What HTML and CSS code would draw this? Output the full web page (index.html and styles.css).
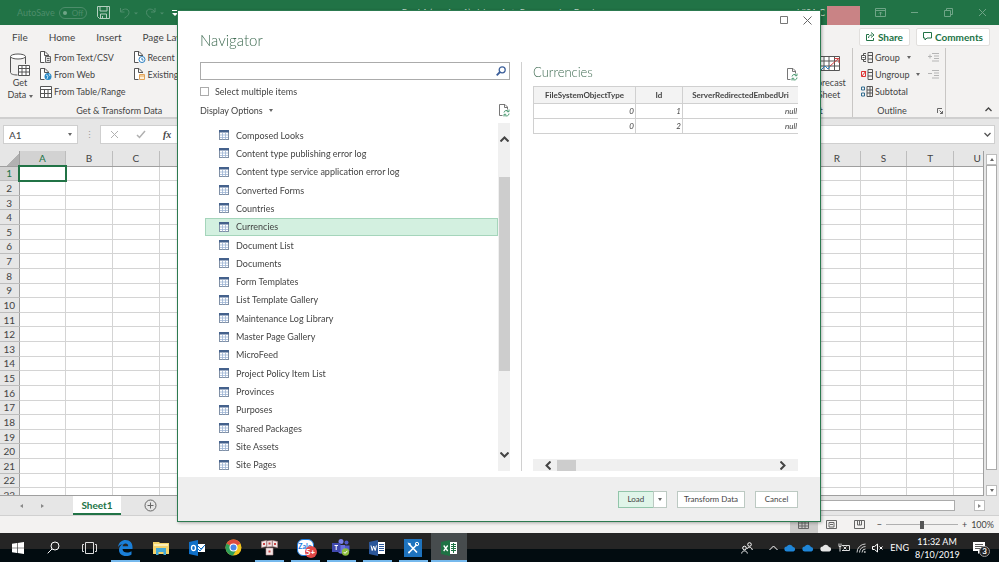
FILE: index.html
```html
<!DOCTYPE html>
<html lang="en">
<head>
    <meta charset="utf-8">
    <title>Excel - Navigator</title>
    <link rel="stylesheet" href="styles.css">
</head>
<body>
    <svg class="sprite" aria-hidden="true">
        <symbol id="i-table" viewBox="0 0 10 10">
            <rect x=".5" y=".5" width="9" height="9" fill="#fff" stroke="#8090a6"/>
            <path d="M0 0h10v2.500H0z" fill="#44618c"/>
            <path d="M3.500 2.500v7M6.500 2.500v7M1 5h8M1 7.500h8" stroke="#9db4d4" stroke-width=".8"/>
        </symbol>
        <symbol id="i-refresh" viewBox="0 0 12 13">
            <path d="M4.500 11.500h-3V.5H7l2.500 2.500v2.500M6.500.5v3h3" fill="none" stroke="#777"/>
            <path d="M6 8.500a2.500 2.500 0 0 1 4.500-1M11 9.500a2.500 2.500 0 0 1-4.500 1.500M11 5.500v2.200H8.800M6 12.500v-2.200h2.200" fill="none" stroke="#4c9a72"/>
        </symbol>
        <symbol id="i-page" viewBox="0 0 12 13">
            <path d="M4.500 11.500h-4V.5H5L8.500 4v1M4.500.5v4h4" fill="#fff" stroke="#555"/>
        </symbol>
        <symbol id="i-cloud" viewBox="0 0 12 8">
            <path d="M3 7.500a2.500 2.500 0 0 1-.3-5A3.500 3.500 0 0 1 9 3a2.300 2.300 0 0 1 .5 4.500z"/>
        </symbol>
    </svg>

    <div class="app">
        <header class="titlebar">
            <span class="autosave">AutoSave</span>
            <label class="toggle"><input type="checkbox" aria-label="AutoSave"><span>Off</span></label>
            <button class="save" aria-label="Save">
                <svg width="13" height="13" viewBox="0 0 13 13" fill="none" stroke="#b5d0c0"><path d="M.5.5h12v12h-10l-2-2zM3 .5v4.500h7V.5M3.500 12.500V8h6v4.500M5.500 12V10"/></svg>
            </button>
            <button class="dim" aria-label="Undo">
                <svg width="20" height="12" viewBox="0 0 20 12" fill="none" stroke="#4d8d6b"><path d="M1.500 1v4h4M1.500 5C4 1 10 1 10 5.500c0 2.500-2 4-4.500 5.500"/><path d="M15 5.500h4l-2 2z" fill="#4d8d6b" stroke="none"/></svg>
            </button>
            <button class="dim" aria-label="Redo">
                <svg width="20" height="12" viewBox="0 0 20 12" fill="none" stroke="#4d8d6b"><path d="M10 1v4H6M10 5C7.500 1 1.500 1 1.500 5.500c0 2.500 2 4 4.500 5.500"/><path d="M15 5.500h4l-2 2z" fill="#4d8d6b" stroke="none"/></svg>
            </button>
            <button aria-label="Customize toolbar">
                <svg width="8" height="8" viewBox="0 0 8 8" fill="#fff"><path d="M1 1h6v1H1zM1 4h6L4 7z"/></svg>
            </button>
            <span class="doc-title">Book1 (version 1).xlsb &nbsp;-&nbsp; AutoRecovered &nbsp;-&nbsp; Excel</span>
            <span class="user">VISA C</span>
            <span class="avatar"></span>
            <div class="window-buttons">
                <button aria-label="Ribbon display options"><svg width="11" height="9" viewBox="0 0 11 9" fill="none" stroke="#6fa587"><path d="M.5.5h10v8H.5zM.5 2.500h10M5.500 7.500V4M4 5.500L5.500 4 7 5.500"/></svg></button>
                <button aria-label="Minimize"><svg width="9" height="9" viewBox="0 0 9 9" stroke="#6fa587"><path d="M1 4.500h7"/></svg></button>
                <button aria-label="Restore"><svg width="9" height="9" viewBox="0 0 9 9" fill="none" stroke="#6fa587"><path d="M.5 2.500h6v6h-6zM2.500 2.500v-2h6v6h-2"/></svg></button>
                <button aria-label="Close"><svg width="9" height="9" viewBox="0 0 9 9" stroke="#6fa587"><path d="M1 1l7 7M8 1L1 8"/></svg></button>
            </div>
        </header>

        <nav class="tabs">
            <a href="#">File</a>
            <a href="#">Home</a>
            <a href="#">Insert</a>
            <a href="#">Page Layout</a>
            <button class="pill share"><svg width="9" height="9" viewBox="0 0 9 9" fill="none" stroke="#217346"><path d="M3 2.500H.5v6h7V6M2.500 6C2.500 4 4 3 6 3M5 .5L8 3 5 5.500"/></svg>Share</button>
            <button class="pill"><svg width="9" height="9" viewBox="0 0 9 9" fill="none" stroke="#217346"><path d="M.5.5h8v5.500H4L2 8V6H.5z"/></svg>Comments</button>
        </nav>

        <div class="ribbon">
            <section class="group">
                <div class="group-body">
                    <button class="big">
                        <svg width="22" height="24" viewBox="0 0 22 24" fill="none" stroke="#555"><path d="M1.500 3.500v16c0 1.500 3 2.500 7 2.500M16.500 3.500V11"/><ellipse cx="9" cy="3.500" rx="7.500" ry="2.500" fill="#fff"/><path d="M9.500 12.500h11v10h-11zM9.500 15.500h11M9.500 19h11M13 12.500v10M17 12.500v10" fill="#fff"/></svg>
                        <span>Get<br>Data <i class="caret"></i></span>
                    </button>
                    <div class="stack">
                        <button><svg width="12" height="13"><use href="#i-page"/><path d="M5.500 5.500h5v6h-5zM7 7.500h2.500M7 9.500h2.500" fill="#ddd" stroke="#666"/></svg>From Text/CSV</button>
                        <button><svg width="12" height="13"><use href="#i-page"/><circle cx="8" cy="8.500" r="3.500" fill="#2b8ac6"/><path d="M6 7l2 1-1 3M9 6l1 2" stroke="#bfe0f3" fill="none"/></svg>From Web</button>
                        <button><svg width="12" height="12" viewBox="0 0 12 12" fill="#fff" stroke="#555"><path d="M.5.5h11v11H.5zM.5 3.500h11M4.500 3.500v8M.5 7.500h11M8 3.500v8"/></svg>From Table/Range</button>
                    </div>
                    <div class="stack">
                        <button><svg width="12" height="13"><use href="#i-page"/><circle cx="8" cy="8.500" r="3" fill="#fff" stroke="#2b7fc0"/><path d="M8 7v2h1.500" stroke="#2b7fc0" fill="none"/></svg>Recent Sources</button>
                        <button><svg width="12" height="13"><use href="#i-page"/><path d="M5.500 6.500h5v5h-5zM5.500 8h5" fill="#fff0d8" stroke="#e2a55a"/></svg>Existing Connections</button>
                    </div>
                </div>
                <h2>Get &amp; Transform Data</h2>
            </section>
            <section class="group forecast">
                <div class="group-body">
                    <button class="big">
                        <svg width="26" height="24" viewBox="0 0 26 24" fill="none" stroke="#555"><path d="M1.500 3.500h22v14h-22zM1.500 8h22M1.500 13h22M8 3.500v14M13 3.500v14M18.500 3.500v14" fill="#fff"/><path d="M3 19l6-6 3 3 3-4" stroke="#2b7fc0"/><path d="M14 13l8-7M18.500 5.500H23V10" stroke="#d64545"/></svg>
                        <span>Forecast<br>Sheet</span>
                    </button>
                </div>
                <h2>Forecast</h2>
            </section>
            <section class="group outline">
                <div class="group-body">
                    <div class="stack">
                        <button><svg width="12" height="11" viewBox="0 0 12 11" fill="none" stroke="#555"><path d="M7 .5h4.500v10H7zM7 3.500h4.500M7 7h4.500M5 1.500H2.500v8H5"/><path d="M.5 3.500h4v4h-4z" fill="#fff"/><path d="M1.500 5.500h2"/></svg>Group <i class="caret"></i></button>
                        <button><svg width="12" height="11" viewBox="0 0 12 11" fill="none" stroke="#555"><path d="M7 .5h4.500v10H7zM7 3.500h4.500M7 7h4.500"/><path d="M.5 2.500h4v5h-4zM1 7l4-5" stroke="#d33"/></svg>Ungroup <i class="caret"></i></button>
                        <button><svg width="12" height="11" viewBox="0 0 12 11" fill="none" stroke="#555"><path d="M6 .5h5.500v10H6zM6 4h5.500M6 7h5.500M9 .5v10"/><path d="M.5 1h3v3h-3zM.5 7h3v3h-3z" stroke="#2f6b8f"/></svg>Subtotal</button>
                    </div>
                    <div class="stack">
                        <button aria-label="Show detail"><svg width="12" height="9" viewBox="0 0 12 9" stroke="#b5b5b5"><path d="M0 3.500h4M2 1.500v4M4 .5h7M6 3h5M6 5.500h5M4 8h7"/></svg></button>
                        <button aria-label="Hide detail"><svg width="12" height="9" viewBox="0 0 12 9" stroke="#b5b5b5"><path d="M0 3.500h4M4 .5h7M6 3h5M6 5.500h5M4 8h7"/></svg></button>
                    </div>
                </div>
                <h2>Outline <svg width="6" height="6" viewBox="0 0 6 6" fill="none" stroke="#666"><path d="M.5 5V.5H5M2.500 2.500l3 3M5.500 3v2.500H3"/></svg></h2>
            </section>
            <button class="collapse" aria-label="Collapse ribbon"><svg width="7" height="5" viewBox="0 0 7 5" fill="none" stroke="#444" stroke-width="1.300"><path d="M.5 4l3-3 3 3"/></svg></button>
        </div>

        <div class="formula-bar">
            <div class="name-box">
                <input type="text" value="A1" aria-label="Name box">
                <i class="caret"></i>
            </div>
            <span class="dots">⋮</span>
            <div class="formula">
                <svg width="9" height="9" viewBox="0 0 9 9" stroke="#b0b0b0"><path d="M1 1l7 7M8 1L1 8"/></svg>
                <svg width="10" height="9" viewBox="0 0 10 9" fill="none" stroke="#b0b0b0" stroke-width="1.500"><path d="M1 5l2.500 2.500L9 1"/></svg>
                <em>fx</em>
                <input type="text" aria-label="Formula">
                <svg width="7" height="5" viewBox="0 0 7 5" fill="none" stroke="#555" stroke-width="1.300"><path d="M.5 1l3 3 3-3"/></svg>
            </div>
        </div>

        <main class="workspace">
            <div class="sheet">
                <table class="grid" id="grid"></table>
            </div>
            <div class="vscroll">
                <button aria-label="Scroll up"><i class="caret up"></i></button>
                <div class="thumb"></div>
                <button aria-label="Scroll down"><i class="caret"></i></button>
            </div>
        </main>

        <div class="sheet-tabs">
            <i class="caret left"></i>
            <i class="caret right"></i>
            <a href="#" class="sheet-tab">Sheet1</a>
            <button aria-label="New sheet"><svg width="13" height="13" viewBox="0 0 13 13" fill="none" stroke="#666"><circle cx="6.500" cy="6.500" r="5.500"/><path d="M3.500 6.500h6M6.500 3.500v6"/></svg></button>
            <div class="hscroll">
                <div class="thumb"></div>
                <button aria-label="Scroll right"><i class="caret right"></i></button>
            </div>
        </div>

        <div class="statusbar">
            <button class="view active" aria-label="Normal"><svg width="11" height="9" viewBox="0 0 11 9" fill="none" stroke="#666"><path d="M.5.5h10v8H.5zM.5 3h10M.5 6h10M4 .5v8M7 .5v8"/></svg></button>
            <button class="view" aria-label="Page layout"><svg width="11" height="9" viewBox="0 0 11 9" fill="none" stroke="#666"><path d="M.5.5h10v8H.5zM3 2.500h5v4.500H3zM4 4.500h3"/></svg></button>
            <button class="view" aria-label="Page break"><svg width="11" height="9" viewBox="0 0 11 9" fill="none" stroke="#666"><path d="M.5.5h10v8H.5zM3.500.5V5h4V.5M5.500.5V5"/></svg></button>
            <div class="zoom">
                <span>−</span>
                <input type="range" min="0" max="100" value="50" aria-label="Zoom">
                <span>+</span>
                <span class="percent">100%</span>
            </div>
        </div>

        <footer class="taskbar">
            <button class="start" aria-label="Start"><svg width="12" height="12" viewBox="0 0 12 12" fill="#fff"><path d="M0 1.700l5-.7v4.700H0zM5.600.9L12 0v5.700H5.600zM0 6.300h5V11l-5-.7zM5.600 6.300H12V12l-6.400-.9z"/></svg></button>
            <button aria-label="Search"><svg width="13" height="13" viewBox="0 0 13 13" fill="none" stroke="#fff"><circle cx="8" cy="5" r="4"/><path d="M5 8L.7 12.300"/></svg></button>
            <button aria-label="Task view"><svg width="15" height="12" viewBox="0 0 15 12" fill="none" stroke="#ddd"><path d="M3.500.5h8v11h-8zM2 2.500H.5v7H2M13 2.500h1.500v7H13"/></svg></button>
            <button class="open" aria-label="Edge"><svg width="16" height="16" viewBox="0 0 16 16"><path d="M1 7C2 2 5 0 8.500 0 13 0 15.500 3 15.500 7v2H5.500c.2 2.500 2 3.500 4.500 3.500 1.800 0 3.200-.4 4.500-1.200v3.200C13 15.500 11.200 16 9 16c-4.500 0-7-2.600-7-6 0-2.700 1.500-4.700 4-6C3.600 4.300 2 5.500 1 7zm4.600-.8h5.600c0-1.700-1-2.700-2.600-2.700S5.900 4.500 5.600 6.200z" fill="#1a7fd8"/></svg></button>
            <button aria-label="File Explorer"><svg width="16" height="14" viewBox="0 0 16 14"><path d="M0 1h6l1 1h9v11H0z" fill="#f3d36b"/><path d="M1 3h14v2H1z" fill="#fbeeb4"/><path d="M3 7h10v7h-2.500v-3h-5v3H3z" fill="#45a9d6"/></svg></button>
            <button aria-label="Outlook"><svg width="16" height="16" viewBox="0 0 16 16"><path d="M7 4h9v8H7z" fill="#fff"/><path d="M8 5l4 4 4-4M9 9l2 2 4-5" stroke="#0f70c8" fill="none"/><path d="M0 2l9-2v16l-9-2z" fill="#0f70c8"/><ellipse cx="4.500" cy="8" rx="2" ry="2.600" fill="none" stroke="#fff" stroke-width="1.300"/></svg></button>
            <button aria-label="Chrome"><svg width="17" height="17" viewBox="0 0 17 17"><circle cx="8.500" cy="8.500" r="8" fill="#f3c51d"/><path d="M8.500 8.500L1.600 4.500A8 8 0 0 1 15.400 4.500z" fill="#dd4b3e"/><path d="M8.500 8.500L1.600 4.500A8 8 0 0 0 8 16.500l3-5z" fill="#2f9f5a"/><circle cx="8.500" cy="8.500" r="4" fill="#fff"/><circle cx="8.500" cy="8.500" r="3" fill="#4a86e8"/></svg></button>
            <button class="open" aria-label="Boxes"><svg width="17" height="16" viewBox="0 0 17 16" fill="#f1e6e6" stroke="#b98f92" stroke-width=".6"><path d="M.5 1.500l5-1v6l-5 1zM6 1l5-.5v6L6 7zM11.500.5l5 1v6l-5-1zM5 8h7v7H5z"/><path d="M2 3h2v2H2zM7.500 2.500h2v2h-2zM13 3h2v2h-2zM7.500 10.500h2v2h-2z" fill="#c44" stroke="none"/></svg></button>
            <button class="open" aria-label="Zalo"><span class="zalo">Zalo<b>5+</b></span></button>
            <button class="open" aria-label="Teams"><svg width="18" height="17" viewBox="0 0 18 17"><circle cx="9" cy="2.500" r="2.500" fill="#7b83eb"/><circle cx="14.500" cy="3.500" r="2" fill="#5059c9"/><path d="M6 6h7v6a4 4 0 0 1-7 1z" fill="#6a72dd"/><path d="M13 6.500h4.500V12L13 14z" fill="#5059c9"/><path d="M0 4h8.500v9H0z" fill="#4048ae"/><path d="M2.500 6.500H6M4.200 6.500v4.500" stroke="#fff"/><circle cx="13.500" cy="13" r="3.700" fill="#8cbd3f"/><path d="M11.700 13l1.300 1.400 2.400-2.600" stroke="#fff" fill="none"/></svg></button>
            <button class="open" aria-label="Word"><svg width="16" height="16" viewBox="0 0 16 16"><path d="M8 2h8v12H8z" fill="#fff"/><path d="M10 4.500h5M10 6.500h5M10 8.500h5M10 10.500h5" stroke="#2b579a"/><path d="M0 2l9-2v16l-9-2z" fill="#2b579a"/><path d="M2 5.500l1.200 5L4.700 6l1.500 4.500 1.200-5" fill="none" stroke="#fff"/></svg></button>
            <button class="open" aria-label="Tools"><svg width="18" height="18" viewBox="0 0 18 18"><path d="M0 0h18v18H0z" fill="#1e73be"/><path d="M5 13.500l8-8M5 5l8 8.500" stroke="#fff" stroke-width="1.600"/><path d="M3.500 3.500l1.500 3 1.500-.5.500-1.500z" fill="#fff"/><circle cx="13" cy="5" r="1.700" fill="none" stroke="#fff"/><circle cx="5" cy="13.500" r="1" fill="#fff"/></svg></button>
            <button class="open current" aria-label="Excel"><svg width="16" height="16" viewBox="0 0 16 16"><path d="M8 2h8v12H8z" fill="#fff"/><path d="M10 4.500h5M10 6.500h5M10 8.500h5M10 10.500h5M12.500 3v10" stroke="#1f7244"/><path d="M0 2l9-2v16l-9-2z" fill="#1f7244"/><path d="M2.700 5.500l4 5.500M6.700 5.500l-4 5.500" stroke="#fff" stroke-width="1.300"/></svg></button>
            <div class="tray">
                <svg class="people" width="12" height="12" viewBox="0 0 12 12" fill="none" stroke="#fff"><circle cx="8.500" cy="2.500" r="1.800"/><path d="M6 7c.5-2.500 4.800-2.500 5.300 1"/><circle cx="3.500" cy="6" r="1.800"/><path d="M.7 11.500c.3-3.500 5.300-3.500 5.600 0"/></svg>
                <svg width="9" height="6" viewBox="0 0 9 6" fill="none" stroke="#fff"><path d="M.5 5l4-4 4 4"/></svg>
                <svg width="12" height="8" fill="#1f86d8"><use href="#i-cloud"/></svg>
                <svg width="12" height="8" fill="#1f86d8"><use href="#i-cloud"/></svg>
                <svg width="12" height="8" fill="#e6e6e6"><use href="#i-cloud"/></svg>
                <svg width="12" height="9" viewBox="0 0 12 9" fill="none" stroke="#ddd"><path d="M4 2.500h7.500v5H4M5.500 3.500l3 3M8.500 3.500l-3 3M1 .5v3h2v-3M2 3.500v5"/></svg>
                <svg width="10" height="10" viewBox="0 0 10 10" fill="none" stroke="#ccc"><path d="M1 9.500A8.500 8.500 0 0 1 9.500 1M3.500 9.500a6 6 0 0 1 6-6M6 9.500A3.500 3.500 0 0 1 9.500 6"/><circle cx="8.800" cy="9" r=".6"/></svg>
                <svg width="12" height="10" viewBox="0 0 12 10" fill="none" stroke="#fff"><path d="M.5 3.500h2L5.500 1v8l-3-2.500h-2zM7.500 3.500l3 3M10.500 3.500l-3 3"/></svg>
                <span>ENG</span>
                <span class="clock">11:32 AM<br>8/10/2019</span>
                <span class="notify"><svg width="12" height="12" viewBox="0 0 12 12"><path d="M0 0h12v9H8l-3 3V9H0z" fill="#fff"/><path d="M2 2.500h8M2 4.500h8M2 6.500h8" stroke="#333" stroke-width=".8"/></svg><b>3</b></span>
            </div>
        </footer>
    </div>

    <div class="dialog" role="dialog" aria-labelledby="dialog-title">
        <div class="dialog-controls">
            <button aria-label="Maximize"><svg width="8" height="8" viewBox="0 0 8 8" fill="none" stroke="#777"><path d="M.5.5h7v7h-7z"/></svg></button>
            <button aria-label="Close"><svg width="9" height="9" viewBox="0 0 9 9" stroke="#666"><path d="M.5.5l8 8M8.500.5l-8 8"/></svg></button>
        </div>
        <h1 id="dialog-title">Navigator</h1>
        <div class="panes">
            <div class="left-pane">
                <div class="search">
                    <input type="text" aria-label="Search">
                    <svg width="10" height="10" viewBox="0 0 10 10" fill="none" stroke="#3c5f9a" stroke-width="1.300"><circle cx="6.200" cy="3.800" r="3"/><path d="M4 6L.7 9.300" stroke-width="1.800"/></svg>
                </div>
                <div class="multi">
                    <input type="checkbox" id="multi">
                    <label for="multi">Select multiple items</label>
                </div>
                <div class="options">
                    <button>Display Options <i class="caret"></i></button>
                    <button aria-label="Refresh"><svg width="12" height="13"><use href="#i-refresh"/></svg></button>
                </div>
                <div class="tree">
                    <ul>
                        <li><svg><use href="#i-table"/></svg>Composed Looks</li>
                        <li><svg><use href="#i-table"/></svg>Content type publishing error log</li>
                        <li><svg><use href="#i-table"/></svg>Content type service application error log</li>
                        <li><svg><use href="#i-table"/></svg>Converted Forms</li>
                        <li><svg><use href="#i-table"/></svg>Countries</li>
                        <li class="selected"><svg><use href="#i-table"/></svg>Currencies</li>
                        <li><svg><use href="#i-table"/></svg>Document List</li>
                        <li><svg><use href="#i-table"/></svg>Documents</li>
                        <li><svg><use href="#i-table"/></svg>Form Templates</li>
                        <li><svg><use href="#i-table"/></svg>List Template Gallery</li>
                        <li><svg><use href="#i-table"/></svg>Maintenance Log Library</li>
                        <li><svg><use href="#i-table"/></svg>Master Page Gallery</li>
                        <li><svg><use href="#i-table"/></svg>MicroFeed</li>
                        <li><svg><use href="#i-table"/></svg>Project Policy Item List</li>
                        <li><svg><use href="#i-table"/></svg>Provinces</li>
                        <li><svg><use href="#i-table"/></svg>Purposes</li>
                        <li><svg><use href="#i-table"/></svg>Shared Packages</li>
                        <li><svg><use href="#i-table"/></svg>Site Assets</li>
                        <li><svg><use href="#i-table"/></svg>Site Pages</li>
                    </ul>
                    <div class="tree-scroll">
                        <svg width="9" height="6" viewBox="0 0 9 6" fill="none" stroke="#444" stroke-width="2"><path d="M.5 5.500l4-4 4 4"/></svg>
                        <div class="thumb"></div>
                        <svg width="9" height="6" viewBox="0 0 9 6" fill="none" stroke="#444" stroke-width="2"><path d="M.5.5l4 4 4-4"/></svg>
                    </div>
                </div>
            </div>
            <div class="right-pane">
                <div class="preview-head">
                    <h2>Currencies</h2>
                    <button aria-label="Refresh preview"><svg width="12" height="13"><use href="#i-refresh"/></svg></button>
                </div>
                <table class="preview">
                    <thead>
                        <tr><th>FileSystemObjectType</th><th>Id</th><th>ServerRedirectedEmbedUri</th></tr>
                    </thead>
                    <tbody>
                        <tr><td>0</td><td>1</td><td>null</td></tr>
                        <tr><td>0</td><td>2</td><td>null</td></tr>
                    </tbody>
                </table>
                <div class="preview-scroll">
                    <svg width="6" height="9" viewBox="0 0 6 9" fill="none" stroke="#444" stroke-width="2"><path d="M5.500.5l-4 4 4 4"/></svg>
                    <div class="thumb"></div>
                    <svg width="6" height="9" viewBox="0 0 6 9" fill="none" stroke="#444" stroke-width="2"><path d="M.5.5l4 4-4 4"/></svg>
                </div>
            </div>
        </div>
        <div class="dialog-footer">
            <div class="split">
                <button class="load">Load</button>
                <button aria-label="Load options"><i class="caret"></i></button>
            </div>
            <button>Transform Data</button>
            <button>Cancel</button>
        </div>
    </div>

    <script src="script.js"></script>
</body>
</html>
```
FILE: styles.css
```css
* {
    box-sizing: border-box;
}
body {
    margin: 0;
    font-family: Lato, "Open Sans", sans-serif;
    font-size: 9px;
    color: #444;
    overflow: hidden;
}
button, input {
    font: inherit;
    color: inherit;
    margin: 0;
    padding: 0;
    border: none;
    background: none;
    min-width: 0;
}
a {
    color: inherit;
    text-decoration: none;
}
h1, h2, ul {
    margin: 0;
    padding: 0;
    font-weight: normal;
}
svg {
    display: block;
    flex: none;
}
.sprite {
    position: absolute;
    width: 0;
    height: 0;
}
.caret {
    display: inline-block;
    border: 2px solid transparent;
    border-top: 3px solid #666;
    border-bottom: none;
}
.caret.up {
    border-top: none;
    border-bottom: 3px solid #666;
}
.caret.right {
    border: 2px solid transparent;
    border-left: 3px solid #888;
    border-right: none;
}
.caret.left {
    border: 2px solid transparent;
    border-right: 3px solid #888;
    border-left: none;
}
.app {
    display: flex;
    flex-direction: column;
    height: 100vh;
    background: #e6e6e6;
}

/* title bar */
.titlebar {
    display: flex;
    align-items: center;
    height: 25px;
    flex: none;
    padding-left: 17px;
    background: #217346;
    color: #c5dccf;
    white-space: nowrap;
}
.autosave {
    color: #4d8d6b;
}
.toggle {
    display: flex;
    align-items: center;
    gap: 5px;
    width: 28px;
    height: 12px;
    margin: 0 10px 0 4px;
    padding-left: 3px;
    border: 1px solid #4d8d6b;
    border-radius: 6px;
    color: #4d8d6b;
    font-size: 8px;
}
.toggle input {
    appearance: none;
    width: 4px;
    height: 4px;
    border-radius: 2px;
    background: #6fa587;
}
.save {
    margin-right: 9px;
}
.dim {
    margin-right: 6px;
}
.doc-title {
    flex: 1;
    padding-left: 20px;
    text-align: center;
}
.user {
    margin-right: 2px;
}
.avatar {
    align-self: flex-end;
    width: 33px;
    height: 19px;
    margin-right: 3px;
    background: #c98385;
}
.window-buttons {
    display: flex;
}
.window-buttons button {
    display: flex;
    justify-content: center;
    width: 34px;
}

/* ribbon tabs */
.tabs {
    display: flex;
    align-items: center;
    gap: 21px;
    height: 23px;
    flex: none;
    padding: 0 9px 0 12px;
    background: #f3f2f1;
    font-size: 10px;
}
.pill {
    display: flex;
    align-items: center;
    gap: 3px;
    height: 18px;
    padding: 0 6px;
    border: 1px solid #e1dfdd;
    border-radius: 2px;
    background: #fff;
    color: #217346;
    font-weight: bold;
}
.share {
    margin-left: auto;
    margin-right: -15px;
}

/* ribbon */
.ribbon {
    display: flex;
    height: 71px;
    flex: none;
    border-bottom: 2px solid #cfcfcf;
    background: #f3f2f1;
    white-space: nowrap;
}
.group {
    display: flex;
    flex-direction: column;
    justify-content: space-between;
}
.group h2 {
    display: flex;
    justify-content: center;
    align-items: center;
    font-size: 9px;
    line-height: 12px;
}
.group-body {
    display: flex;
    padding-top: 1px;
}
.big {
    display: flex;
    flex-direction: column;
    align-items: center;
    width: 40px;
    padding-top: 4px;
    line-height: 12px;
}
.stack {
    display: flex;
    flex-direction: column;
    align-items: flex-start;
    margin-right: 8px;
}
.stack button {
    display: flex;
    align-items: center;
    gap: 2px;
    height: 17px;
}
.stack .caret {
    margin-left: 5px;
}
.forecast {
    width: 90px;
    margin-left: auto;
    padding-right: 3px;
    border-right: 1px solid #c8c6c4;
}
.forecast .group-body {
    justify-content: flex-end;
}
.outline {
    width: 93px;
    padding-left: 8px;
    border-right: 1px solid #c8c6c4;
}
.outline .stack + .stack {
    margin: 0 6px 0 auto;
}
.outline h2 {
    gap: 30px;
    padding-left: 14px;
}
.collapse {
    align-self: flex-end;
    padding: 0 7px 5px 39px;
}

/* formula bar */
.formula-bar {
    display: flex;
    align-items: center;
    height: 32px;
    flex: none;
    padding: 0 4px 1px 3px;
}
.name-box {
    display: flex;
    align-items: center;
    width: 75px;
    height: 19px;
    padding: 0 5px;
    border: 1px solid #cfcfcf;
    background: #fff;
    font-size: 10px;
}
.name-box input {
    flex: 1;
}
.dots {
    width: 22px;
    text-align: center;
    color: #999;
}
.formula {
    display: flex;
    align-items: center;
    gap: 17px;
    flex: 1;
    height: 19px;
    padding: 0 3px 0 9px;
    border: 1px solid #cfcfcf;
    background: #fff;
}
.formula em {
    font: italic bold 10px "Liberation Serif", serif;
}
.formula input {
    flex: 1;
}

/* cells */
.workspace {
    display: flex;
    flex: 1;
    min-height: 0;
}
.sheet {
    flex: 1;
    overflow: hidden;
    border-right: 1px solid #9f9f9f;
    border-bottom: 1px solid #9f9f9f;
}
.grid {
    width: calc(100% + 18px);
    height: calc(100% + 8px);
    table-layout: fixed;
    border-collapse: collapse;
    background: #fff;
    font-size: 10px;
    line-height: 12px;
}
.grid th, .grid td {
    padding: 0;
    border: 1px solid #d4d4d4;
}
.grid th {
    border-color: #bdbdbd;
    background: #e6e6e6;
    font-weight: normal;
}
.grid thead th {
    height: 15px;
    border-top: none;
    border-bottom-color: #9f9f9f;
}
.grid th:first-child {
    width: 19px;
    border-left: none;
    border-right-color: #9f9f9f;
}
.grid .corner {
    background: linear-gradient(135deg, #e6e6e6 62%, #b1b1b1 62%);
}
.grid th.on {
    background: #d2d2d2;
    color: #217346;
}
.grid td.active {
    outline: 2px solid #217346;
    outline-offset: -1px;
}
.vscroll {
    display: flex;
    flex-direction: column;
    width: 15px;
    padding: 3px 2px 0;
}
.vscroll button, .hscroll button {
    display: flex;
    justify-content: center;
    align-items: center;
    height: 11px;
    border: 1px solid #bdbdbd;
    background: #fff;
}
.vscroll .thumb {
    flex: 1;
    margin-bottom: 15px;
    border: 1px solid #ababab;
    background: #fff;
}

/* sheet tabs */
.sheet-tabs {
    display: flex;
    align-items: center;
    height: 20px;
    flex: none;
    padding-left: 20px;
    border-bottom: 1px solid #d0d0d0;
}
.sheet-tabs > .caret {
    margin-right: 18px;
}
.sheet-tab {
    align-self: stretch;
    width: 48px;
    margin-right: 23px;
    margin-left: 11px;
    border-bottom: 2px solid #217346;
    background: #fff;
    color: #217346;
    font-size: 10px;
    font-weight: bold;
    line-height: 18px;
    text-align: center;
}
.hscroll {
    display: flex;
    width: 220px;
    margin: 0 14px 0 auto;
}
.hscroll .thumb {
    flex: 1;
    margin-right: 19px;
    border: 1px solid #ababab;
    background: #fff;
}
.hscroll button {
    width: 11px;
}

/* status bar */
.statusbar {
    display: flex;
    justify-content: flex-end;
    align-items: center;
    height: 17px;
    flex: none;
    padding-right: 5px;
    background: #f3f2f1;
}
.view {
    display: flex;
    justify-content: center;
    align-items: center;
    width: 28px;
    height: 17px;
}
.view.active {
    background: #cdcccb;
}
.zoom {
    display: flex;
    align-items: center;
    gap: 4px;
    margin-left: 3px;
}
.zoom input {
    appearance: none;
    width: 72px;
    height: 1px;
    background: #b0b0b0;
}
.zoom input::-webkit-slider-thumb {
    appearance: none;
    width: 4px;
    height: 8px;
    background: #555;
}

/* taskbar */
.taskbar {
    display: flex;
    height: 29px;
    flex: none;
    background: linear-gradient(#252525 16px, #020c10 16px);
    color: #fff;
}
.taskbar > button {
    display: flex;
    justify-content: center;
    align-items: center;
    width: 36px;
}
.taskbar > .start {
    width: 35px;
}
.taskbar > .open {
    background: linear-gradient(#76b9ed, #76b9ed) center bottom / 29px 2px no-repeat;
}
.taskbar > .current {
    background: linear-gradient(#76b9ed, #76b9ed) center bottom / 100% 2px no-repeat, #474c4e;
}
.zalo {
    position: relative;
    width: 17px;
    height: 17px;
    border: 1px solid #1a7be0;
    border-radius: 6px;
    background: #fff;
    color: #1a7be0;
    font-size: 7px;
    font-weight: bold;
    line-height: 12px;
}
.zalo b {
    position: absolute;
    right: -4px;
    bottom: -3px;
    width: 12px;
    height: 12px;
    border-radius: 6px;
    background: #e04848;
    color: #fff;
    font-size: 8px;
    line-height: 12px;
}
.tray {
    display: flex;
    align-items: center;
    gap: 6px;
    margin-left: auto;
    padding-right: 14px;
}
.people {
    margin-right: 10px;
}
.clock {
    width: 44px;
    text-align: center;
    line-height: 13px;
}
.notify {
    position: relative;
    margin-left: 8px;
}
.notify b {
    position: absolute;
    left: 6px;
    top: 4px;
    width: 11px;
    height: 11px;
    border: 1px solid #999;
    border-radius: 6px;
    background: #222;
    font-size: 8px;
    line-height: 9px;
    text-align: center;
}

/* navigator dialog, floats over the workbook */
.dialog {
    position: fixed;
    inset: 10px 178px 40px 177px;
    display: flex;
    flex-direction: column;
    border: 1px solid #2c7a50;
    background: #fff;
    box-shadow: 1px 1px 3px rgba(0, 0, 0, 0.3);
}
.dialog-controls {
    display: flex;
    justify-content: flex-end;
    align-items: center;
    gap: 15px;
    height: 18px;
    padding-right: 8px;
}
.dialog h1 {
    padding-left: 22px;
    color: #3f6b52;
    font-size: 15px;
    font-weight: 300;
    line-height: 22px;
}
.panes {
    display: grid;
    grid-template-columns: 310fr 277fr;
    grid-template-rows: 100%;
    gap: 11px;
    flex: 1;
    min-height: 0;
    padding: 11px 22px 6px;
}
.left-pane {
    display: flex;
    flex-direction: column;
    min-width: 0;
}
.search {
    display: flex;
    align-items: center;
    height: 18px;
    flex: none;
    padding: 0 3px;
    border: 1px solid #ababab;
}
.search input {
    flex: 1;
}
.multi {
    display: flex;
    align-items: center;
    gap: 6px;
    height: 22px;
    flex: none;
}
.multi input {
    appearance: none;
    width: 9px;
    height: 9px;
    border: 1px solid #ababab;
}
.options {
    display: flex;
    justify-content: space-between;
    align-items: center;
    height: 16px;
    flex: none;
}
.options .caret {
    margin: 0 0 2px 4px;
}
.tree {
    display: flex;
    flex: 1;
    min-height: 0;
    margin-top: 5px;
    padding-left: 5px;
}
.tree ul {
    display: flex;
    flex-direction: column;
    flex: 1;
    padding-top: 3px;
    margin-bottom: -3px;
    list-style: none;
}
.tree li {
    display: flex;
    align-items: center;
    gap: 7px;
    flex: 1;
    padding-left: 13px;
    border: 1px solid transparent;
    white-space: nowrap;
}
.tree li svg {
    width: 10px;
    height: 10px;
}
.tree li.selected {
    border-color: #a5d5bb;
    background: #d3f0e0;
}
.tree-scroll {
    display: flex;
    flex-direction: column;
    align-items: center;
    width: 12px;
    padding: 13px 0;
    background: #f0f0f0;
}
.tree-scroll .thumb {
    width: 11px;
    height: 194px;
    margin: 35px 0 auto;
    background: #cdcdcd;
}
.right-pane {
    display: flex;
    flex-direction: column;
    min-width: 0;
    padding-left: 11px;
    border-left: 1px solid #d0d0d0;
}
.preview-head {
    display: flex;
    justify-content: space-between;
    align-items: center;
    height: 24px;
    flex: none;
}
.preview-head h2 {
    color: #3f6b52;
    font-size: 13px;
    font-weight: 300;
    line-height: 20px;
    align-self: flex-start;
}
.preview {
    width: 100%;
    table-layout: fixed;
    border-collapse: collapse;
    font-size: 8px;
    line-height: 14px;
}
.preview th, .preview td {
    height: 15px;
    padding: 0 1px;
    border: 1px solid #d0d0d0;
    border-right: none;
}
.preview th {
    height: 17px;
    background: #f3f3f3;
    font-weight: bold;
}
.preview th:first-child {
    width: 102px;
}
.preview th:nth-child(2) {
    width: 47px;
}
.preview td {
    font-style: italic;
    text-align: right;
}
.preview-scroll {
    display: flex;
    align-items: center;
    height: 12px;
    margin-top: auto;
    padding: 0 12px;
    background: #f0f0f0;
}
.preview-scroll .thumb {
    width: 19px;
    height: 11px;
    margin: 0 auto 0 6px;
    background: #cdcdcd;
}
.dialog-footer {
    display: flex;
    justify-content: flex-end;
    align-items: center;
    gap: 10px;
    height: 44px;
    flex: none;
    padding-right: 22px;
    background: #eee;
}
.dialog-footer button {
    height: 17px;
    padding: 0 6px;
    border: 1px solid #bcc9c2;
    background: #fff;
    font-size: 8px;
}
.dialog-footer > button {
    min-width: 43px;
}
.split {
    display: flex;
}
.dialog-footer .load {
    width: 36px;
    margin-right: -1px;
    border-color: #92c5aa;
    background: #e0f5e9;
}
.dialog-footer .load + button {
    display: flex;
    align-items: center;
    padding: 0 4px;
}
```
FILE: script.js
```js
// columns D to Q sit behind the dialog and get no letter
var letters = ['A', 'B', 'C'].concat(new Array(14).fill(''), ['R', 'S', 'T', 'U']);
var rowCount = 23;
var html = '<thead><tr><th class="corner"></th>';

letters.forEach(function (letter) {
    html += '<th' + (letter === 'A' ? ' class="on"' : '') + '>' + letter + '</th>';
});
html += '</tr></thead><tbody>';

for (var row = 1; row <= rowCount; row++) {
    html += '<tr><th' + (row === 1 ? ' class="on"' : '') + '>' + row + '</th>';
    for (var col = 0; col < letters.length; col++) {
        html += '<td' + (row === 1 && col === 0 ? ' class="active"' : '') + '></td>';
    }
    html += '</tr>';
}

document.getElementById('grid').innerHTML = html + '</tbody>';
```
